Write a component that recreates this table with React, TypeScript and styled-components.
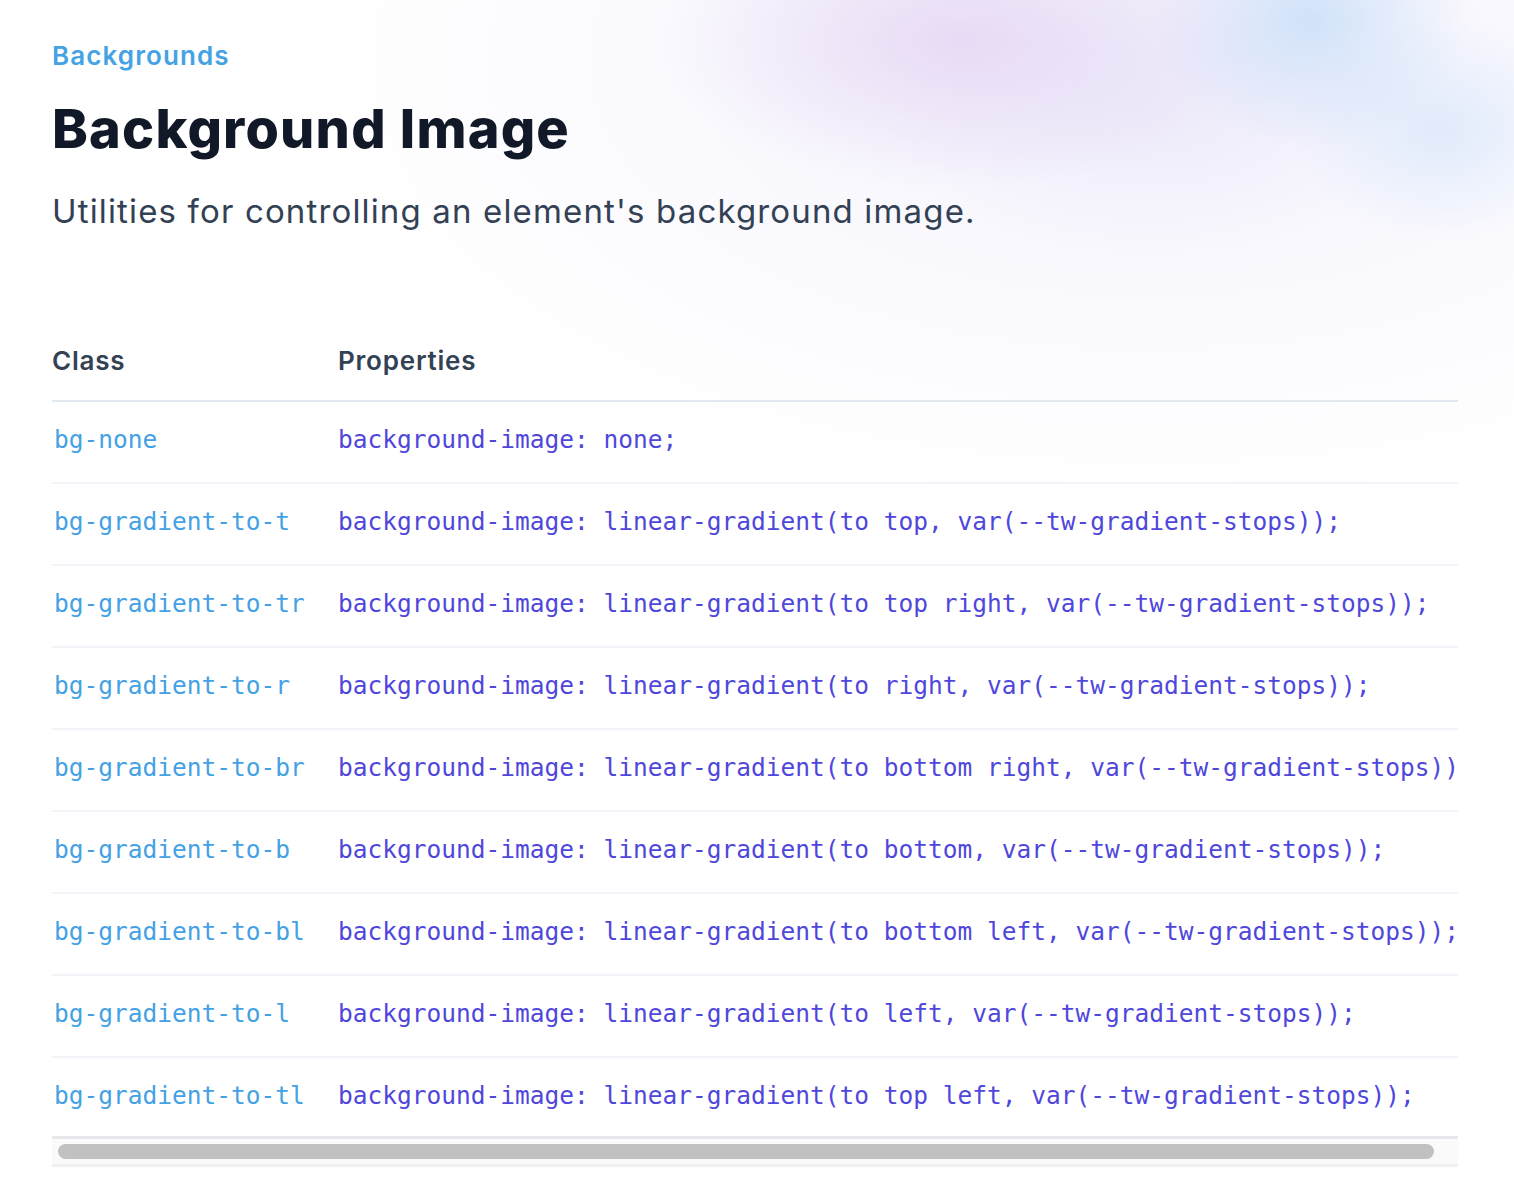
import styled, { createGlobalStyle } from "styled-components";

const GlobalStyle = createGlobalStyle`
    html, body {
        margin: 0;
        padding: 0;
        background: #ffffff;
    }
    body {
        font-family: Inter, "Noto Sans", "Liberation Sans", sans-serif;
        -webkit-font-smoothing: antialiased;
    }
`;

const Page = styled.div`
    min-height: 1192px;
    box-sizing: border-box;
    padding: 38px 56px 0 52px;
    background:
        radial-gradient(ellipse 160px 130px at 1310px 20px, rgba(196, 220, 248, 0.75), rgba(196, 220, 248, 0) 100%),
        radial-gradient(ellipse 150px 110px at 1440px 130px, rgba(208, 226, 250, 0.6), rgba(208, 226, 250, 0) 100%),
        radial-gradient(ellipse 300px 150px at 960px 40px, rgba(228, 212, 243, 0.8), rgba(228, 212, 243, 0) 100%),
        radial-gradient(ellipse 260px 150px at 1150px 110px, rgba(234, 230, 249, 0.65), rgba(234, 230, 249, 0) 100%),
        radial-gradient(ellipse 850px 440px at 1150px 60px, rgba(239, 237, 251, 0.7), rgba(239, 237, 251, 0) 100%),
        #ffffff;
`;

const Header = styled.header`
    display: flex;
    flex-direction: column;
`;

const Eyebrow = styled.p`
    margin: 0;
    font-size: 26px;
    line-height: 35px;
    font-weight: 600;
    letter-spacing: 1.1px;
    color: #45a3e5;
`;

const Title = styled.h1`
    margin: 24px 0 0;
    font-size: 54px;
    line-height: 63px;
    font-weight: 800;
    letter-spacing: 1.2px;
    color: #111827;
`;

const Lead = styled.p`
    margin: 27px 0 0;
    font-size: 33px;
    line-height: 49px;
    font-weight: 400;
    letter-spacing: 1.15px;
    color: #334155;
`;

const TableWrap = styled.div`
    margin-top: 107px;
    overflow: hidden;
`;

const Table = styled.table`
    border-collapse: collapse;
    white-space: nowrap;
    text-align: left;
    width: max-content;
    min-width: 100%;
`;

const HeadCell = styled.th`
    padding: 0 0 22px;
    font-size: 26px;
    line-height: 35px;
    font-weight: 600;
    letter-spacing: 0.8px;
    color: #334155;
    border-bottom: 2px solid #e2e8f0;
    width: ${props => props.$width || "auto"};
`;

const Row = styled.tr`
    border-bottom: 2px solid #f1f5f9;
    &:last-child {
        border-bottom: none;
    }
`;

const CodeCell = styled.td`
    padding: 20px 0 25px;
    font-family: "DejaVu Sans Mono", "Liberation Mono", monospace;
    font-size: 24.5px;
    line-height: 35px;
    color: ${props => props.$tone === "class" ? "#43a1e4" : "#4f47dc"};
    padding-left: ${props => props.$tone === "class" ? "2px" : "0"};
`;

const ScrollTrack = styled.div`
    height: 25px;
    border-top: 3px solid #e6e8eb;
    border-bottom: 3px solid #f0f0f0;
    background: #fafafa;
    display: flex;
    align-items: center;
    padding: 0 24px 0 6px;
    margin-top: -2px;
`;

const ScrollThumb = styled.div`
    flex: 1;
    height: 15px;
    border-radius: 8px;
    background: #c1c1c1;
`;

const rows = [
    ["bg-none", "background-image: none;"],
    ["bg-gradient-to-t", "background-image: linear-gradient(to top, var(--tw-gradient-stops));"],
    ["bg-gradient-to-tr", "background-image: linear-gradient(to top right, var(--tw-gradient-stops));"],
    ["bg-gradient-to-r", "background-image: linear-gradient(to right, var(--tw-gradient-stops));"],
    ["bg-gradient-to-br", "background-image: linear-gradient(to bottom right, var(--tw-gradient-stops));"],
    ["bg-gradient-to-b", "background-image: linear-gradient(to bottom, var(--tw-gradient-stops));"],
    ["bg-gradient-to-bl", "background-image: linear-gradient(to bottom left, var(--tw-gradient-stops));"],
    ["bg-gradient-to-l", "background-image: linear-gradient(to left, var(--tw-gradient-stops));"],
    ["bg-gradient-to-tl", "background-image: linear-gradient(to top left, var(--tw-gradient-stops));"],
];

const App = () => {
    return (
        <Page>
            <GlobalStyle />
            <Header>
                <Eyebrow>Backgrounds</Eyebrow>
                <Title>Background Image</Title>
                <Lead>Utilities for controlling an element's background image.</Lead>
            </Header>
            <TableWrap>
                <Table>
                    <thead>
                        <tr>
                            <HeadCell $width="286px">Class</HeadCell>
                            <HeadCell>Properties</HeadCell>
                        </tr>
                    </thead>
                    <tbody>
                        {rows.map(([cls, props]) => (
                            <Row key={cls}>
                                <CodeCell $tone="class">{cls}</CodeCell>
                                <CodeCell>{props}</CodeCell>
                            </Row>
                        ))}
                    </tbody>
                </Table>
            </TableWrap>
            <ScrollTrack>
                <ScrollThumb />
            </ScrollTrack>
        </Page>
    );
};

export default App;
